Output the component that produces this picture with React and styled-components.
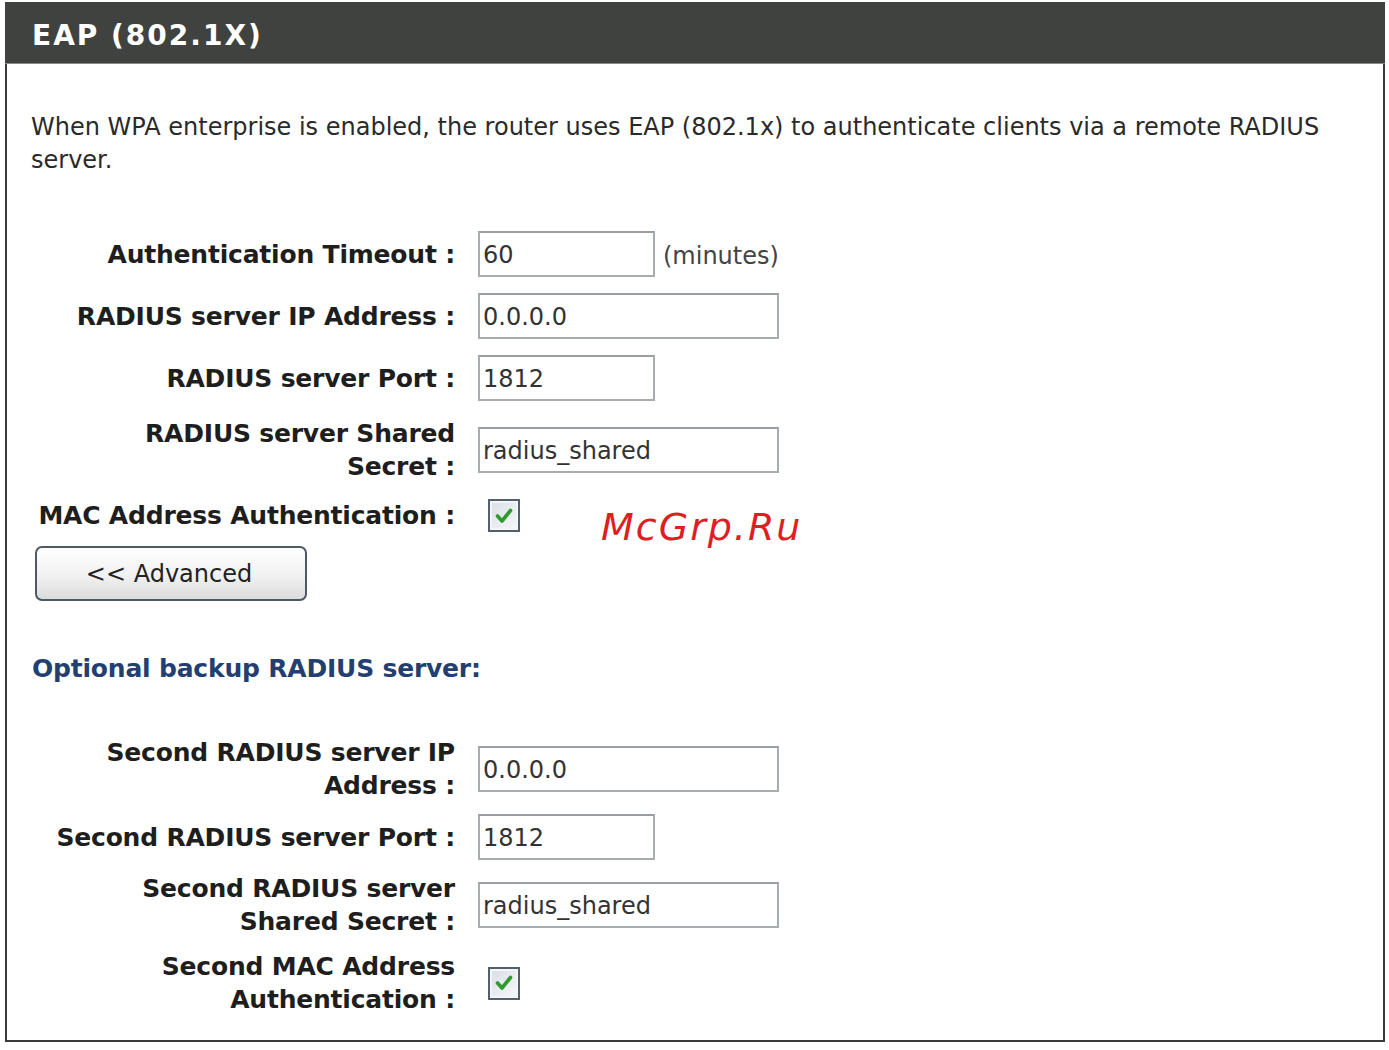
import styled, { createGlobalStyle } from 'styled-components';

const GlobalStyle = createGlobalStyle`
    html, body {
        margin: 0;
        padding: 0;
        background: #fff;
    }
    body {
        font-family: "DejaVu Sans", Verdana, sans-serif;
        color: #222;
    }
`;

const primaryRows = [
    { label: 'Authentication Timeout :', value: '60', size: 'short', note: '(minutes)' },
    { label: 'RADIUS server IP Address :', value: '0.0.0.0', size: 'long' },
    { label: 'RADIUS server Port :', value: '1812', size: 'short' },
    { label: ['RADIUS server Shared', 'Secret :'], value: 'radius_shared', size: 'long' },
    { label: 'MAC Address Authentication :', checkbox: true },
];

const backupRows = [
    { label: ['Second RADIUS server IP', 'Address :'], value: '0.0.0.0', size: 'long' },
    { label: 'Second RADIUS server Port :', value: '1812', size: 'short' },
    { label: ['Second RADIUS server', 'Shared Secret :'], value: 'radius_shared', size: 'long' },
    { label: ['Second MAC Address', 'Authentication :'], checkbox: true },
];

const CheckBox = () => (
    <Check>
        <svg width="20" height="20" viewBox="0 0 20 20">
            <path d="M3.5 10 L8 15 L16.5 4.5" fill="none" stroke="#2f9a2f" strokeWidth="3.6" strokeLinecap="round" strokeLinejoin="round" />
        </svg>
    </Check>
);

const FormRows = ({ rows, $gap }) => (
    <Form $gap={$gap}>
        {rows.map((row, i) => (
            <Row key={i}>
                <Label>
                    {Array.isArray(row.label)
                        ? row.label.map((line) => <span key={line}>{line}</span>)
                        : row.label}
                </Label>
                <Field>
                    {row.checkbox ? (
                        <CheckBox />
                    ) : (
                        <>
                            <Input $size={row.size} defaultValue={row.value} />
                            {row.note && <Note>{row.note}</Note>}
                        </>
                    )}
                </Field>
            </Row>
        ))}
    </Form>
);

const App = () => {
    return <Page>
        <GlobalStyle />
        <Panel>
            <Header>EAP (802.1X)</Header>
            <Body>
                <Intro>
                    When WPA enterprise is enabled, the router uses EAP (802.1x) to authenticate clients via a remote RADIUS
                    <br />
                    server.
                </Intro>
                <FormRows rows={primaryRows} $gap={16} />
                <AdvancedButton type="button">&lt;&lt; Advanced</AdvancedButton>
                <SubTitle>Optional backup RADIUS server:</SubTitle>
                <FormRows rows={backupRows} $gap={12} />
            </Body>
            <Watermark>McGrp.Ru</Watermark>
        </Panel>
    </Page>;
};

const Page = styled.div`
    padding: 2px 4px 10px 5px;
`;

const Panel = styled.div`
    position: relative;
    width: 1380px;
    box-sizing: border-box;
    border: 2px solid #3a3a3a;
    border-top: none;
    background: #fff;
`;

const Header = styled.div`
    height: 61px;
    margin: 0 -2px;
    background: #404240;
    color: #fff;
    font-family: "DejaVu Sans", Verdana, sans-serif;
    font-weight: bold;
    font-size: 28px;
    letter-spacing: 2px;
    line-height: 68px;
    padding-left: 27px;
    border-bottom: 1px solid #8a8a8a;
`;

const Body = styled.div`
    padding: 47px 24px 24px 24px;
`;

const Intro = styled.p`
    margin: 0 0 54px;
    font-size: 24px;
    line-height: 33px;
    color: #2a2a2a;
`;

const Form = styled.div`
    display: flex;
    flex-direction: column;
    gap: ${(p) => p.$gap}px;
`;

const Row = styled.div`
    display: grid;
    grid-template-columns: 424px 1fr;
    column-gap: 23px;
    align-items: center;
`;

const Label = styled.div`
    text-align: right;
    font-weight: bold;
    font-size: 25px;
    line-height: 33px;
    color: #1e1e1e;
    letter-spacing: -0.2px;

    span {
        display: block;
    }
`;

const Field = styled.div`
    display: flex;
    align-items: center;
    gap: 8px;
`;

const Input = styled.input`
    box-sizing: border-box;
    width: ${(p) => (p.$size === 'long' ? 301 : 177)}px;
    height: 46px;
    border: 2px solid #a8acb0;
    border-top-color: #9a9ea2;
    padding: 2px 3px 0;
    font-family: "DejaVu Sans", Verdana, sans-serif;
    font-size: 24px;
    color: #333;
    background: #fff;
    outline: none;
`;

const Note = styled.span`
    font-size: 24px;
    color: #444;
    padding-top: 4px;
`;

const Check = styled.span`
    display: inline-flex;
    align-items: center;
    justify-content: center;
    box-sizing: border-box;
    width: 32px;
    height: 33px;
    margin-left: 10px;
    border: 2px solid #55606e;
    background: linear-gradient(135deg, #d8dde4, #f8f9fb);
    box-shadow: inset 0 0 0 2px #f4f5f7;
`;

const AdvancedButton = styled.button`
    display: block;
    box-sizing: border-box;
    width: 272px;
    height: 55px;
    margin: 14px 0 0 4px;
    border: 2px solid #4e5866;
    border-radius: 7px;
    background: linear-gradient(#ffffff, #f1f1f1 55%, #dcdcdc);
    font-family: "DejaVu Sans", Verdana, sans-serif;
    font-size: 24px;
    color: #222;
    padding: 0 4px 0 0;
`;

const SubTitle = styled.h3`
    margin: 51px 0 51px 1px;
    font-size: 25px;
    line-height: 33px;
    font-weight: bold;
    color: #233f72;
    letter-spacing: -0.2px;
`;

const Watermark = styled.div`
    position: absolute;
    left: 594px;
    top: 503px;
    font-family: "DejaVu Sans", sans-serif;
    font-style: italic;
    font-size: 38px;
    letter-spacing: 2px;
    color: #dd1f24;
`;

export default App;
